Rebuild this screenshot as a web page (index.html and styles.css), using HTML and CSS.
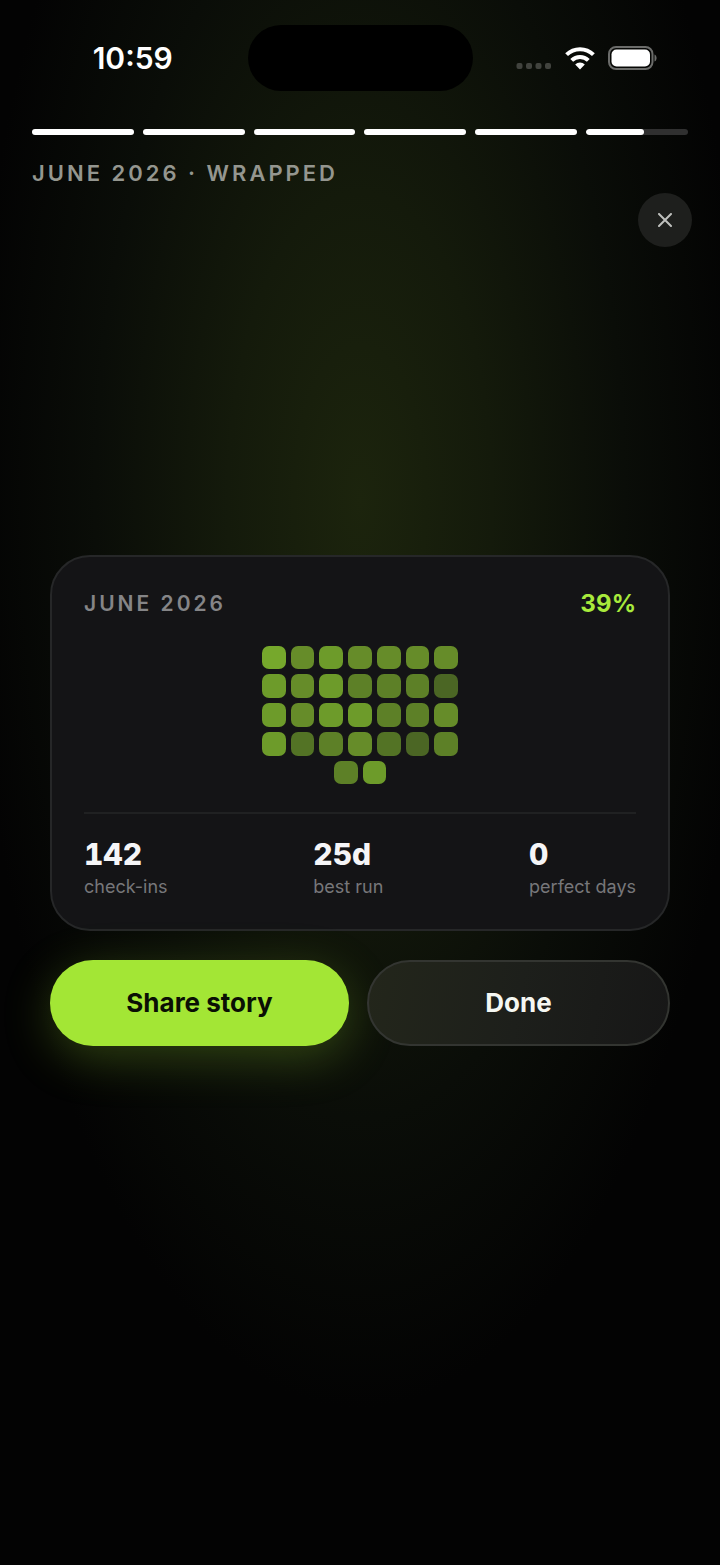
FILE: index.html
```html
<!DOCTYPE html>
<html lang="en">
<head>
<meta charset="utf-8">
<meta name="viewport" content="width=device-width, initial-scale=1">
<title>June 2026 Wrapped</title>
<link rel="stylesheet" href="styles.css">
</head>
<body>
<div class="screen">
  <div class="statusbar">
    <time class="clock">10:59</time>
    <div class="island"></div>
    <div class="indicators">
      <svg class="cellular" width="36" height="24" viewBox="0 0 36 24" aria-hidden="true">
        <rect x="0.500" y="17" width="6" height="6" rx="2"/><rect x="10" y="17" width="6" height="6" rx="2"/><rect x="19.500" y="17" width="6" height="6" rx="2"/><rect x="29" y="17" width="6" height="6" rx="2"/>
      </svg>
      <svg class="wifi" width="30" height="24" viewBox="0 0 30 24" aria-hidden="true">
        <path d="M1.600 8.700A19 19 0 0 1 28.400 8.700M6.700 14.400A11.800 11.800 0 0 1 23.300 14.400"/>
        <path class="wifi-dot" d="M15 23.400L10.200 18.600A6.800 6.800 0 0 1 19.800 18.600Z"/>
      </svg>
      <svg class="battery" width="50" height="24" viewBox="0 0 50 24" aria-hidden="true">
        <rect class="battery-case" x="1" y="1" width="43.500" height="22" rx="7"/>
        <rect class="battery-level" x="3.500" y="3.500" width="38.500" height="17" rx="5"/>
        <path class="battery-cap" d="M46.500 8.500C49.300 9.500 49.300 14.500 46.500 15.500Z"/>
      </svg>
    </div>
  </div>

  <header class="story-header">
    <div class="progress">
      <span class="segment full"></span><span class="segment full"></span><span class="segment full"></span><span class="segment full"></span><span class="segment full"></span><span class="segment"><span class="segment-fill" style="width:57%"></span></span>
    </div>
    <h1 class="eyebrow">JUNE 2026 · WRAPPED</h1>
    <button class="close" type="button" aria-label="Close">
      <svg width="14" height="14" viewBox="0 0 14 14" aria-hidden="true"><path d="M1 1L13 13M13 1L1 13"/></svg>
    </button>
  </header>

  <main class="story">
    <section class="card">
      <div class="card-head">
        <h2 class="eyebrow card-title">JUNE 2026</h2>
        <strong class="score">39%</strong>
      </div>
      <div class="days">
        <div class="week"><i class="day l6"></i><i class="day l4"></i><i class="day l5"></i><i class="day l4"></i><i class="day l4"></i><i class="day l4"></i><i class="day l4"></i></div>
        <div class="week"><i class="day l5"></i><i class="day l4"></i><i class="day l5"></i><i class="day l3"></i><i class="day l3"></i><i class="day l3"></i><i class="day l1"></i></div>
        <div class="week"><i class="day l5"></i><i class="day l4"></i><i class="day l5"></i><i class="day l5"></i><i class="day l3"></i><i class="day l3"></i><i class="day l4"></i></div>
        <div class="week"><i class="day l5"></i><i class="day l2"></i><i class="day l3"></i><i class="day l4"></i><i class="day l2"></i><i class="day l1"></i><i class="day l3"></i></div>
        <div class="week"><i class="day l3"></i><i class="day l5"></i></div>
      </div>
      <dl class="stats">
        <div class="stat"><dd>142</dd><dt>check-ins</dt></div>
        <div class="stat"><dd>25d</dd><dt>best run</dt></div>
        <div class="stat"><dd>0</dd><dt>perfect days</dt></div>
      </dl>
    </section>
    <div class="actions">
      <button class="btn primary" type="button">Share story</button>
      <button class="btn secondary" type="button">Done</button>
    </div>
  </main>
</div>
</body>
</html>
```

FILE: styles.css
```css
* { box-sizing: border-box; }

body {
  margin: 0;
  background: #000;
  color: #fff;
  font-family: Inter, "Liberation Sans", sans-serif;
}

h1, h2, dl, dd { margin: 0; }

button { font: inherit; border: 0; padding: 0; cursor: pointer; }

.screen {
  min-height: 100vh;
  display: flex;
  flex-direction: column;
  background: radial-gradient(ellipse 54% 58% at 50% 32%, #1c240d 0%, #141a0b 34%, #0a0d08 68%, #030303 100%);
}

/* Status bar */
.statusbar {
  display: grid;
  grid-template-columns: 1fr 225px 1fr;
  align-items: center;
  padding-top: 25px;
}

.clock {
  justify-self: center;
  padding-left: 18px;
  font-size: 30px;
  line-height: 36px;
  font-weight: 600;
}

.island { height: 66px; border-radius: 33px; background: #000; }

.indicators {
  display: flex;
  justify-content: flex-end;
  gap: 13px;
  padding-right: 62px;
}

.indicators svg { flex: none; }
.cellular { fill: #41433e; }
.wifi { fill: none; stroke: #fff; stroke-width: 4; }
.wifi .wifi-dot { fill: #fff; stroke: none; }
.battery-case { fill: none; stroke: #6b6c6a; stroke-width: 2; }
.battery-level { fill: #fff; }
.battery-cap { fill: #6b6c6a; }

/* Story header */
.story-header {
  display: flex;
  flex-direction: column;
  padding: 38px 32px 0;
}

.progress { display: flex; gap: 9px; }

.segment {
  flex: 1;
  height: 6px;
  border-radius: 3px;
  background: #303030;
  overflow: hidden;
}

.segment.full { background: #fff; }
.segment-fill { display: block; height: 100%; border-radius: 3px; background: #fff; }

.eyebrow {
  margin-top: 24px;
  font-size: 22px;
  line-height: 28px;
  font-weight: 600;
  letter-spacing: 3px;
  color: #94968f;
}

.close {
  align-self: flex-end;
  width: 54px;
  height: 54px;
  margin: 6px -4px 0 0;
  border-radius: 50%;
  display: grid;
  place-items: center;
  background: #1e1f1d;
}

.close svg { fill: none; stroke: #bfc0be; stroke-width: 2; stroke-linecap: round; }

/* Summary card */
.story {
  flex: 1;
  display: flex;
  flex-direction: column;
  justify-content: center;
  gap: 29px;
  padding: 0 50px 211px;
}

.card {
  padding: 32px 32px 30px;
  border: 2px solid #262728;
  border-radius: 40px;
  background: #141416;
}

.card-head { display: flex; align-items: center; justify-content: space-between; }
.card-title { margin: 0; font-size: 21px; color: #858587; }
.score {
  font-size: 24px;
  line-height: 30px;
  font-weight: 700;
  font-variant-numeric: tabular-nums;
  color: #a8ea3c;
}

.days {
  width: 196px;
  margin: 27px auto 28px;
  display: flex;
  flex-direction: column;
  gap: 5px;
}

.week { display: flex; justify-content: center; gap: 5px; }
.day { width: calc((100% - 30px) / 7); aspect-ratio: 1; border-radius: 7px; }
.l1 { background: #4b6624; }
.l2 { background: #537325; }
.l3 { background: #5d8027; }
.l4 { background: #668c29; }
.l5 { background: #6d9b2a; }
.l6 { background: #76a82c; }

.stats {
  display: flex;
  justify-content: space-between;
  padding-top: 22px;
  border-top: 2px solid #202122;
}

.stat { display: flex; flex-direction: column; gap: 3px; }
.stat dd {
  font-size: 30px;
  line-height: 36px;
  font-weight: 800;
  font-variant-numeric: tabular-nums;
  color: #f5f5f7;
}
.stat dt { font-size: 18px; line-height: 24px; color: #77777a; }

/* Actions */
.actions { display: grid; grid-template-columns: 299fr 303fr; gap: 18px; }

.btn {
  height: 86px;
  border-radius: 43px;
  font-size: 26px;
  line-height: 32px;
  font-weight: 700;
}

.primary {
  background: #a3e635;
  color: #0a0f04;
  box-shadow: 0 12px 48px rgba(163, 230, 53, 0.25);
}

.secondary {
  border: 2px solid #333531;
  background: linear-gradient(100deg, #23261b, #1d1f1b 50%, #171717);
  color: #f5f7f2;
}
```
